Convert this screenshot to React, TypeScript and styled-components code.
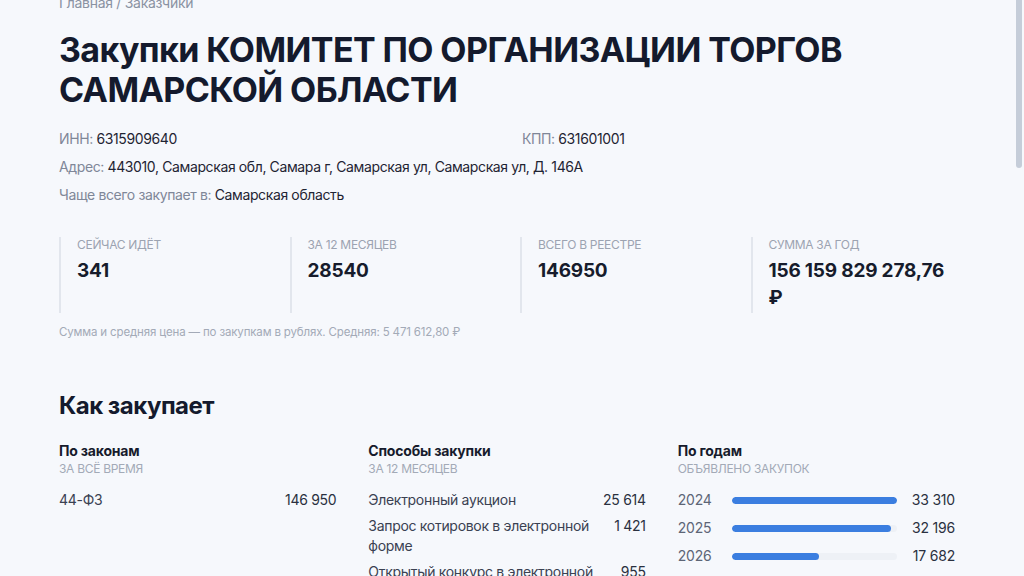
import { useLayoutEffect, useRef } from "react";
import styled, { createGlobalStyle } from "styled-components";

const GlobalStyle = createGlobalStyle`
  html, body {
    margin: 0;
    padding: 0;
    background: #f6f8fc;
    font-family: Inter, "Noto Sans", "DejaVu Sans", sans-serif;
    color: #161b2c;
  }
  * { box-sizing: border-box; }
`;

//# 스크롤 영역
const Page = styled.div`
  height: 100vh;
  overflow-y: auto;
  background: #f6f8fc;
  scrollbar-width: none;
  &::-webkit-scrollbar {
    display: none;
  }
`;

// 스크롤 막대 (headless 에서는 기본 막대가 안 보임)
const ScrollThumb = styled.div`
  position: fixed;
  top: 0;
  right: 2px;
  width: 6px;
  height: 168px;
  border-radius: 0 0 3px 3px;
  background: #c5cdd9;
`;

const Content = styled.main`
  width: 906px;
  margin-left: 59px;
  padding: 20px 0 80px;
  min-height: 1975px;
`;

const Crumbs = styled.div`
  font-size: 14px;
  line-height: 20px;
  color: #8a92a2;
  letter-spacing: -0.3px;
`;

const Title = styled.h1`
  margin: 17px 0 0;
  font-size: 34px;
  line-height: 40px;
  font-weight: 700;
  letter-spacing: -0.6px;
  color: #141a2d;
`;

//# 기본 정보
const InfoGrid = styled.div`
  margin-top: 19px;
  display: grid;
  grid-template-columns: 1fr 1fr;
  column-gap: 20px;
  row-gap: 8px;
`;

const InfoRow = styled.div<{ $wide?: boolean }>`
  grid-column: ${({ $wide }) => ($wide ? "1 / -1" : "auto")};
  font-size: 14px;
  line-height: 20px;
  color: #7f8798;
  letter-spacing: -0.38px;
`;

const InfoValue = styled.span`
  color: #1f2433;
`;

//# 통계
const Stats = styled.div`
  margin-top: 32px;
  display: grid;
  grid-template-columns: repeat(4, 1fr);
  gap: 16px;
`;

const Stat = styled.div`
  border-left: 2px solid #e2e6ed;
  padding: 0 8px 2px 16px;
`;

const StatLabel = styled.div`
  font-size: 12px;
  line-height: 16px;
  color: #9ca3b1;
  text-transform: uppercase;
  letter-spacing: -0.3px;
`;

const StatValue = styled.div`
  margin-top: 4px;
  font-size: 19px;
  line-height: 27px;
  font-weight: 700;
  letter-spacing: -0.2px;
  color: #171c2c;
`;

const Note = styled.p`
  margin: 11px 0 0;
  font-size: 11.5px;
  line-height: 16px;
  color: #a3aab7;
  letter-spacing: -0.15px;
`;

//# 구매 방식
const SectionTitle = styled.h2`
  margin: 50px 0 0;
  font-size: 24px;
  line-height: 32px;
  font-weight: 700;
  letter-spacing: -0.5px;
  color: #141a2d;
`;

const Columns = styled.div`
  margin-top: 19px;
  display: grid;
  grid-template-columns: repeat(3, 1fr);
  gap: 22px;
`;

const Column = styled.section`
  padding-right: 10px;
`;

const ColTitle = styled.h3`
  margin: 0;
  font-size: 14px;
  line-height: 20px;
  font-weight: 700;
  letter-spacing: -0.2px;
  color: #161b2c;
`;

const ColSub = styled.div`
  font-size: 12px;
  line-height: 16px;
  color: #a3aab7;
  text-transform: uppercase;
  letter-spacing: -0.3px;
`;

const List = styled.div<{ $gap: number }>`
  margin-top: 13px;
  display: flex;
  flex-direction: column;
  gap: ${({ $gap }) => $gap}px;
`;

const Row = styled.div`
  display: flex;
  justify-content: space-between;
  align-items: flex-start;
  gap: 14px;
  font-size: 14px;
  line-height: 20px;
  letter-spacing: -0.3px;
  color: #3a4152;
`;

const Num = styled.span`
  white-space: nowrap;
  color: #2a3040;
`;

const YearRow = styled.div`
  display: grid;
  grid-template-columns: 54px 1fr 58px;
  align-items: center;
  font-size: 14px;
  line-height: 20px;
  letter-spacing: -0.2px;
  color: #5d6576;
`;

const Track = styled.div`
  height: 7px;
  border-radius: 4px;
  background: #eef1f6;
  overflow: hidden;
`;

const Fill = styled.div`
  height: 100%;
  border-radius: 4px;
  background: #3b7ee0;
`;

const YearNum = styled.span`
  text-align: right;
  color: #2a3040;
`;

const nbsp = (n: number) => n.toLocaleString("ru-RU").replace(/\s/g, "\u00a0");

const laws = [{ name: "44-ФЗ", count: 146950 }];

const methods = [
  { name: "Электронный аукцион", count: 25614 },
  { name: "Запрос котировок в электронной форме", count: 1421 },
  { name: "Открытый конкурс в электронной форме", count: 955 },
  { name: "Закупка у единственного поставщика", count: 412 },
  { name: "Запрос предложений в электронной форме", count: 138 },
];

const years = [
  { year: 2024, count: 33310 },
  { year: 2025, count: 32196 },
  { year: 2026, count: 17682 },
];

const maxYear = Math.max(...years.map((y) => y.count));

export default function App() {
  const pageRef = useRef<HTMLDivElement>(null);

  useLayoutEffect(() => {
    if (pageRef.current) pageRef.current.scrollTop = 27;
  }, []);

  return (
    <>
      <GlobalStyle />
      <Page ref={pageRef}>
        <Content>
          <Crumbs>Главная / Заказчики</Crumbs>
          <Title>Закупки КОМИТЕТ ПО ОРГАНИЗАЦИИ ТОРГОВ САМАРСКОЙ ОБЛАСТИ</Title>

          <InfoGrid>
            <InfoRow>
              ИНН: <InfoValue>6315909640</InfoValue>
            </InfoRow>
            <InfoRow>
              КПП: <InfoValue>631601001</InfoValue>
            </InfoRow>
            <InfoRow $wide>
              Адрес:{" "}
              <InfoValue>
                443010, Самарская обл, Самара г, Самарская ул, Самарская ул, Д. 146А
              </InfoValue>
            </InfoRow>
            <InfoRow $wide>
              Чаще всего закупает в: <InfoValue>Самарская область</InfoValue>
            </InfoRow>
          </InfoGrid>

          <Stats>
            <Stat>
              <StatLabel>Сейчас идёт</StatLabel>
              <StatValue>341</StatValue>
            </Stat>
            <Stat>
              <StatLabel>За 12 месяцев</StatLabel>
              <StatValue>28540</StatValue>
            </Stat>
            <Stat>
              <StatLabel>Всего в реестре</StatLabel>
              <StatValue>146950</StatValue>
            </Stat>
            <Stat>
              <StatLabel>Сумма за год</StatLabel>
              <StatValue>156 159 829 278,76 ₽</StatValue>
            </Stat>
          </Stats>
          <Note>Сумма и средняя цена — по закупкам в рублях. Средняя: 5 471 612,80 ₽</Note>

          <SectionTitle>Как закупает</SectionTitle>
          <Columns>
            <Column>
              <ColTitle>По законам</ColTitle>
              <ColSub>За всё время</ColSub>
              <List $gap={6}>
                {laws.map((l) => (
                  <Row key={l.name}>
                    <span>{l.name}</span>
                    <Num>{nbsp(l.count)}</Num>
                  </Row>
                ))}
              </List>
            </Column>
            <Column>
              <ColTitle>Способы закупки</ColTitle>
              <ColSub>За 12 месяцев</ColSub>
              <List $gap={6}>
                {methods.map((m) => (
                  <Row key={m.name}>
                    <span>{m.name}</span>
                    <Num>{nbsp(m.count)}</Num>
                  </Row>
                ))}
              </List>
            </Column>
            <Column>
              <ColTitle>По годам</ColTitle>
              <ColSub>Объявлено закупок</ColSub>
              <List $gap={8}>
                {years.map((y) => (
                  <YearRow key={y.year}>
                    <span>{y.year}</span>
                    <Track>
                      <Fill style={{ width: `${(y.count / maxYear) * 100}%` }} />
                    </Track>
                    <YearNum>{nbsp(y.count)}</YearNum>
                  </YearRow>
                ))}
              </List>
            </Column>
          </Columns>
        </Content>
      </Page>
      <ScrollThumb />
    </>
  );
}
